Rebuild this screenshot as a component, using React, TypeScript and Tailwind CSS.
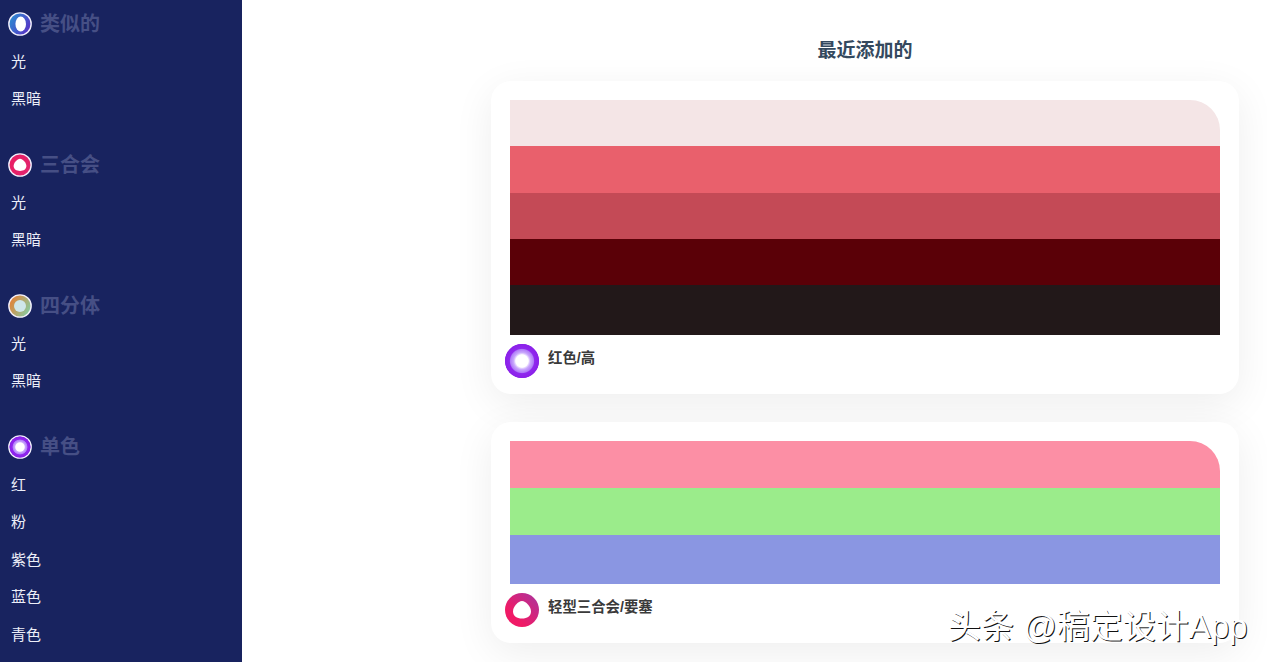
const cjk = "font-['Liberation_Sans','Noto_Sans_CJK_SC',sans-serif]";

function BlobIcon({ id, from, to, inner, border, shape, size, flip }: { id: string; from: string; to: string; inner: string; border: boolean; shape: 'oval' | 'drop' | 'round' | 'ring'; size: number; flip?: boolean }) {
  return (
    <svg width={size} height={size} viewBox="0 0 34 34" className="shrink-0">
      <defs>
        <linearGradient id={id} x1={flip ? '1' : '0'} y1={flip ? '0' : '0.2'} x2={flip ? '0.3' : '1'} y2={flip ? '0.7' : '0.8'}>
          <stop offset="0" stopColor={from} />
          <stop offset="1" stopColor={to} />
        </linearGradient>
        <radialGradient id={`${id}-glow`}>
          <stop offset="0.35" stopColor="#ffffff" />
          <stop offset="0.5" stopColor="#c9a8fc" />
          <stop offset="0.68" stopColor="#b07cf8" />
          <stop offset="0.74" stopColor="#9028ee" />
          <stop offset="1" stopColor="#8a20e8" />
        </radialGradient>
      </defs>
      <circle cx="17" cy="17" r={border ? 15.8 : 17} fill={`url(#${id})`} stroke={border ? '#f1eefb' : 'none'} strokeWidth={border ? 2 : 0} />
      {shape === 'oval' && <ellipse cx="18" cy="17" rx="7.500" ry="10.500" fill="#ffffff" />}
      {shape === 'drop' && <path d="M17 8c3.800 0 9 5.500 9 10.500 0 4.500-3.800 7-9 7s-9-2.500-9-7C8 13.500 13.200 8 17 8z" fill="#ffffff" />}
      {shape === 'round' && <circle cx="17" cy="17" r="8.500" fill={inner} />}
      {shape === 'ring' && (
        <>
          <circle cx="17" cy="17" r={border ? 14.800 : 17} fill={`url(#${id}-glow)`} />
          <circle cx="17" cy="17" r="6.500" fill="#ffffff" />
        </>
      )}
    </svg>
  );
}

const groups = [
  { title: '类似的', icon: { id: 'a', from: '#2a8fd2', to: '#5a2bc4', inner: '#fff', shape: 'oval' as const }, items: ['光', '黑暗'] },
  { title: '三合会', icon: { id: 'b', from: '#ea1e62', to: '#e0246f', inner: '#fff', shape: 'drop' as const }, items: ['光', '黑暗'] },
  { title: '四分体', icon: { id: 'c', from: '#ea7d30', to: '#7fd0a8', inner: '#cfe6ea', shape: 'round' as const }, items: ['光', '黑暗'] },
  { title: '单色', icon: { id: 'd', from: '#9028ee', to: '#9028ee', inner: '#fff', shape: 'ring' as const }, items: ['红', '粉', '紫色', '蓝色', '青色'] },
];

function Sidebar() {
  return (
    <aside className="w-[242px] h-full shrink-0 bg-[#18235f] pt-[10px] overflow-hidden flex flex-col gap-[33px]">
      {groups.map((g) => (
        <div key={g.title}>
          <div className="flex items-center h-[28px] pl-[8px] gap-[8px]">
            <BlobIcon {...g.icon} size={24} border />
            <span className="text-[20px] leading-[28px] font-bold text-[#464f85]">{g.title}</span>
          </div>
          <ul className="mt-[5px]">
            {g.items.map((item, i) => (
              <li key={i} className="h-[37.500px] pl-[11px] flex items-center text-[15px] text-[#eceef8]">
                {item}
              </li>
            ))}
          </ul>
        </div>
      ))}
    </aside>
  );
}

function PaletteCard({ colors, label, icon, className }: { colors: { hex: string; h: string }[]; label: string; icon: React.ReactNode; className: string }) {
  return (
    <div className={`bg-white rounded-[20px] pt-[19px] px-[19px] shadow-[0_10px_40px_rgba(0,0,0,0.07)] ${className}`}>
      <div className="rounded-tr-[30px] overflow-hidden">
        {colors.map((c) => (
          <div key={c.hex} className={`${c.h}`} style={{ backgroundColor: c.hex }} />
        ))}
      </div>
      <div className="flex items-start -ml-[5px] mt-[9px] gap-[9px]">
        {icon}
        <span className="text-[14.400px] leading-[28px] font-bold text-[#3a3a3a]">{label}</span>
      </div>
    </div>
  );
}

export default function App() {
  return (
    <div className={`relative w-[1267px] h-[662px] flex overflow-hidden bg-white ${cjk}`}>
      <Sidebar />
      <main className="flex-1 pl-[249px] pr-[28px] pt-[37px]">
        <h2 className="text-center text-[19px] leading-[28px] font-bold text-[#34495e] mb-[16px]">最近添加的</h2>
        <PaletteCard
          className="h-[313px] mb-[28px]"
          label="红色/高"
          icon={<BlobIcon id="e" from="#9028ee" to="#9028ee" inner="#fff" shape="ring" border={false} size={34} />}
          colors={[
            { hex: '#f4e5e6', h: 'h-[46px]' },
            { hex: '#e9606c', h: 'h-[47px]' },
            { hex: '#c44a56', h: 'h-[46px]' },
            { hex: '#5a0007', h: 'h-[46px]' },
            { hex: '#221819', h: 'h-[50px]' },
          ]}
        />
        <PaletteCard
          className="h-[221px]"
          label="轻型三合会/要塞"
          icon={<BlobIcon id="f" flip from="#a8359f" to="#f01a66" inner="#fff" shape="drop" border={false} size={34} />}
          colors={[
            { hex: '#fc8fa5', h: 'h-[47px]' },
            { hex: '#9bec8b', h: 'h-[47px]' },
            { hex: '#8a96e2', h: 'h-[49px]' },
          ]}
        />
      </main>
      <div className="absolute left-[948px] top-[606px] text-[33px] leading-[42px] whitespace-nowrap text-white [text-shadow:1px_1px_0_#111]">
        头条 @稿定设计App
      </div>
    </div>
  );
}
